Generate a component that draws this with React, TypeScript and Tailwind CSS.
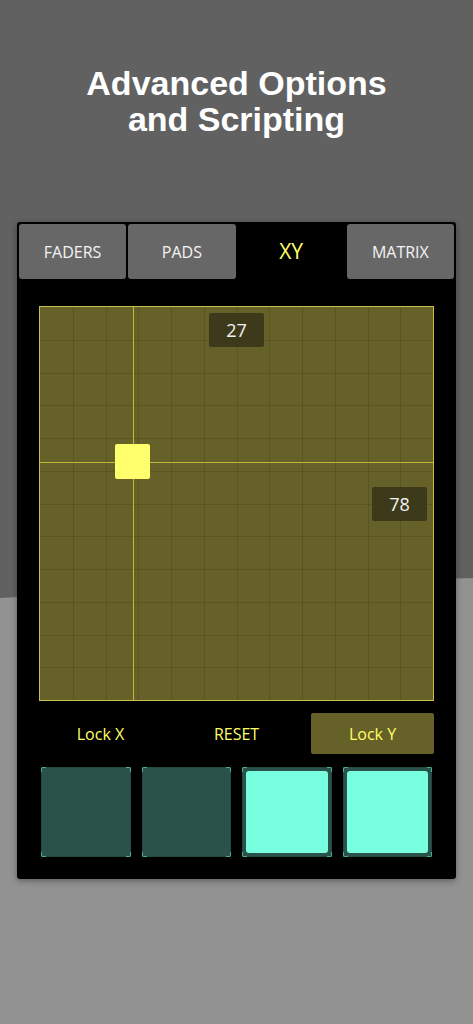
import * as React from "react";

const TABS = ["FADERS", "PADS", "XY", "MATRIX"];
const ACTIVE_TAB = "XY";

// xy pad geometry (px inside the 395 square)
const PAD_SIZE = 393;
const CROSS_X = 93;
const CROSS_Y = 155;

function CornerMarks() {
  const mark = "absolute w-[5px] h-[5px] border-[#4cae9c]";
  return (
    <>
      <span className={`${mark} -left-px -top-px border-l border-t rounded-tl-[2px]`} />
      <span className={`${mark} -right-px -top-px border-r border-t rounded-tr-[2px]`} />
      <span className={`${mark} -left-px -bottom-px border-l border-b rounded-bl-[2px]`} />
      <span className={`${mark} -right-px -bottom-px border-r border-b rounded-br-[2px]`} />
    </>
  );
}

function Pad({ on }: { on: boolean }) {
  return (
    <div className="relative aspect-square rounded-[2px] bg-[#29534a] border border-[#234840]">
      <CornerMarks />
      {on && (
        <div className="absolute inset-[3px] rounded-[3px] bg-[#78ffe0]" />
      )}
    </div>
  );
}

function XYPad() {
  const step = PAD_SIZE / 12;
  const lines = Array.from({ length: 11 }, (_, i) => (i + 1) * step);

  return (
    <div className="relative w-[395px] h-[395px] border border-[#c6c04a] bg-[#666129]">
      <svg
        className="block"
        width={PAD_SIZE}
        height={PAD_SIZE}
        viewBox={`0 0 ${PAD_SIZE} ${PAD_SIZE}`}
      >
        {lines.map((p) => (
          <g key={p} stroke="rgba(0,0,0,0.11)" strokeWidth={1}>
            <line x1={Math.round(p) + 0.5} y1={0} x2={Math.round(p) + 0.5} y2={PAD_SIZE} />
            <line x1={0} y1={Math.round(p) + 0.5} x2={PAD_SIZE} y2={Math.round(p) + 0.5} />
          </g>
        ))}
        <line x1={CROSS_X + 0.5} y1={0} x2={CROSS_X + 0.5} y2={PAD_SIZE} stroke="#c2bc3a" />
        <line x1={0} y1={CROSS_Y + 0.5} x2={PAD_SIZE} y2={CROSS_Y + 0.5} stroke="#c2bc3a" />
      </svg>

      {/* handle */}
      <div className="absolute left-[75px] top-[137px] w-[35px] h-[35px] rounded-[2px] bg-[#ffff6e]" />

      {/* value readouts */}
      <div className="absolute left-[169px] top-[6px] w-[55px] h-[34px] rounded-[2px] bg-[#3d3a1b] flex items-center justify-center text-[18px] text-[#f2f2f2]">
        27
      </div>
      <div className="absolute right-[6px] top-[180px] w-[55px] h-[34px] rounded-[2px] bg-[#3d3a1b] flex items-center justify-center text-[18px] text-[#f2f2f2]">
        78
      </div>
    </div>
  );
}

export default function App() {
  return (
    <div className="relative min-h-[1024px] w-full overflow-hidden bg-[#616161] font-['Open_Sans',sans-serif]">
      {/* lower backdrop curve */}
      <svg
        className="absolute inset-0"
        width="100%"
        height="1024"
        viewBox="0 0 473 1024"
        preserveAspectRatio="none"
      >
        <path d="M0 598 Q236 584 473 578 L473 1024 L0 1024 Z" fill="#929292" />
      </svg>

      <div className="relative flex flex-col items-center">
        <h1 className="pt-[65px] text-center font-['Liberation_Sans',Arial,sans-serif] text-[34px] leading-[36px] font-bold text-white">
          Advanced Options
          <br />
          and Scripting
        </h1>

        {/* Controller card */}
        <div className="mt-[85px] w-[439px] rounded-[3px] bg-black p-[2px] pb-[22px] shadow-[0_2px_6px_rgba(0,0,0,0.35)]">
          <div className="grid grid-cols-4 gap-[2px] h-[55px]">
            {TABS.map((tab) => (
              <div
                key={tab}
                className={
                  tab === ACTIVE_TAB
                    ? "flex items-center justify-center text-[21px] text-[#ffff66]"
                    : "flex items-center justify-center rounded-[3px] bg-[#676767] text-[16px] text-[#f4f4f4]"
                }
              >
                {tab}
              </div>
            ))}
          </div>

          <div className="mx-[20px] mt-[27px]">
            <XYPad />

            <div className="mt-[12px] grid grid-cols-3 gap-[13px] h-[41px] text-[16px] text-[#ffff66]">
              <div className="flex items-center justify-center">Lock X</div>
              <div className="flex items-center justify-center">RESET</div>
              <div className="flex items-center justify-center rounded-[2px] bg-[#666129]">
                Lock Y
              </div>
            </div>

            <div className="mt-[13px] px-[2px] grid grid-cols-4 gap-[11px]">
              <Pad on={false} />
              <Pad on={false} />
              <Pad on />
              <Pad on />
            </div>
          </div>
        </div>
      </div>
    </div>
  );
}
